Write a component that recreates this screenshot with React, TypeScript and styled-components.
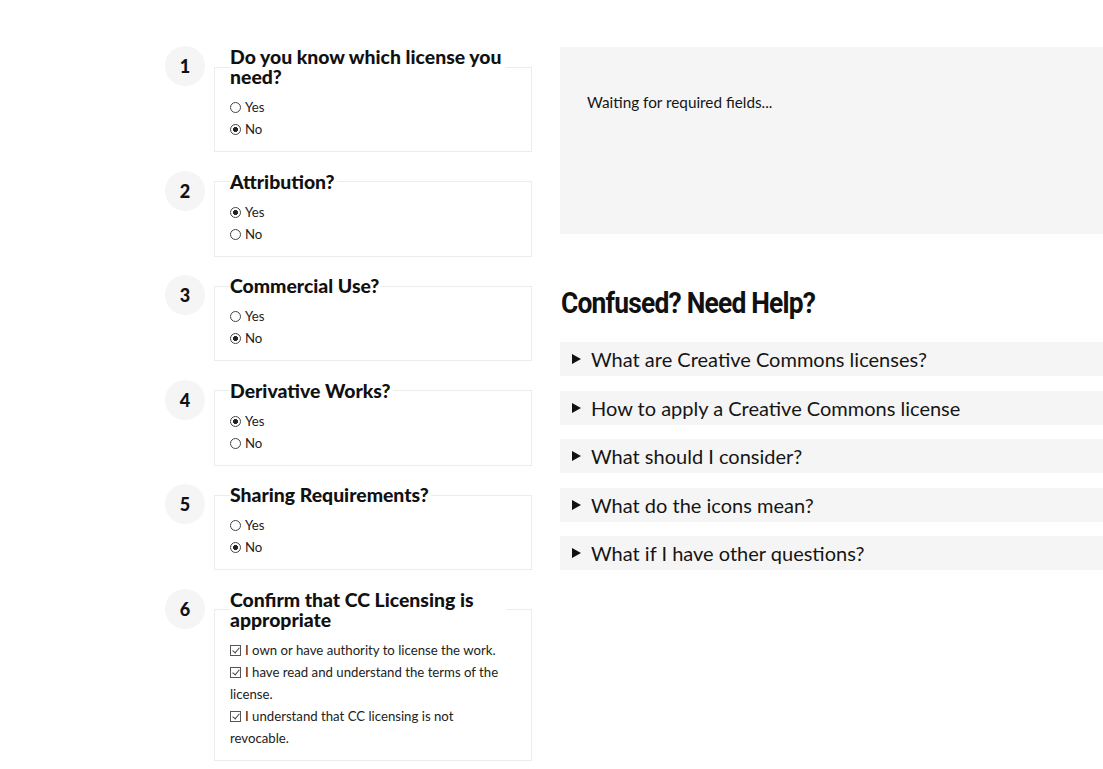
import React, { FunctionComponent } from 'react';
import styled, { createGlobalStyle } from 'styled-components';

const GlobalStyle = createGlobalStyle`
  body {
    margin: 0;
    background: #ffffff;
    color: #151515;
    font-family: 'Source Sans Pro', Lato, 'Noto Sans', sans-serif;
  }
`;

const Page = styled.div`
  display: grid;
  grid-template-columns: 367px 1fr;
  column-gap: 28px;
  padding: 47px 0 0 165px;
  align-items: start;
`;

const Steps = styled.div`
  display: flex;
  flex-direction: column;
  gap: 19.5px;
`;

const Step = styled.div`
  display: flex;
  align-items: flex-start;
  gap: 9px;
`;

const StepNumber = styled.div`
  flex: none;
  width: 40px;
  height: 40px;
  margin-top: -1px;
  border-radius: 50%;
  background: #f5f5f5;
  display: flex;
  align-items: center;
  justify-content: center;
  font-family: Lato, sans-serif;
  font-weight: 900;
  font-size: 18px;
  color: #111;
`;

const Fieldset = styled.fieldset`
  flex: 1;
  margin: 0;
  min-width: 0;
  border: 1px solid #ececec;
  padding: 0 25px 11px 15px;
`;

const Legend = styled.legend`
  padding: 0 2px 0 0;
  font-family: Lato, sans-serif;
  font-weight: 900;
  font-size: 19.4px;
  line-height: 20px;
  color: #111;
  margin-bottom: 9px;
`;

const Option = styled.label`
  display: block;
  font-family: Lato, sans-serif;
  font-size: 13.2px;
  line-height: 22px;
  color: #222;
`;

const Radio = styled.input.attrs({ type: 'radio' })`
  appearance: none;
  width: 11px;
  height: 11px;
  margin: 0 4px 0 0;
  border: 1px solid #444;
  border-radius: 50%;
  vertical-align: -1px;
  background: #fff;
  &:checked {
    background: radial-gradient(circle, #222 0 2.2px, #fff 2.8px);
  }
`;

const Check = styled.input.attrs({ type: 'checkbox' })`
  appearance: none;
  position: relative;
  width: 11px;
  height: 11px;
  margin: 0 4px 0 0;
  border: 1px solid #555;
  vertical-align: -1px;
  background: #fff;
  &:checked::after {
    content: '';
    position: absolute;
    left: 2.5px;
    top: 0px;
    width: 3px;
    height: 6px;
    border: solid #444;
    border-width: 0 1.2px 1.2px 0;
    transform: rotate(40deg);
  }
`;

const Side = styled.div`
  display: flex;
  flex-direction: column;
`;

const Result = styled.div`
  background: #f5f5f5;
  height: 187px;
  padding: 46px 27px 0;
  box-sizing: border-box;
  font-family: Lato, sans-serif;
  font-size: 15.3px;
  color: #151515;
`;

const HelpTitle = styled.h2`
  margin: 53px 0 23px 1px;
  font-family: Roboto, sans-serif;
  font-weight: 700;
  font-size: 30px;
  line-height: 32px;
  letter-spacing: -0.9px;
  color: #111;
  transform: scaleX(0.88);
  transform-origin: left center;
  white-space: nowrap;
`;

const Faq = styled.div`
  display: flex;
  flex-direction: column;
  gap: 14.5px;
`;

const FaqItem = styled.details`
  background: #f5f5f5;
`;

const FaqSummary = styled.summary`
  list-style: none;
  display: flex;
  align-items: center;
  gap: 10px;
  height: 34px;
  padding-left: 12px;
  font-family: Lato, sans-serif;
  font-size: 20px;
  color: #151515;
  cursor: pointer;
  &::-webkit-details-marker {
    display: none;
  }
  &::before {
    content: '';
    width: 0;
    height: 0;
    border-style: solid;
    border-width: 5px 0 5px 9px;
    border-color: transparent transparent transparent #111;
  }
`;

const steps = [
  { title: 'Do you know which license you need?', checked: 'No' },
  { title: 'Attribution?', checked: 'Yes' },
  { title: 'Commercial Use?', checked: 'No' },
  { title: 'Derivative Works?', checked: 'Yes' },
  { title: 'Sharing Requirements?', checked: 'No' },
];

const confirmations = [
  'I own or have authority to license the work.',
  'I have read and understand the terms of the license.',
  'I understand that CC licensing is not revocable.',
];

const questions = [
  'What are Creative Commons licenses?',
  'How to apply a Creative Commons license',
  'What should I consider?',
  'What do the icons mean?',
  'What if I have other questions?',
];

const App: FunctionComponent = () => {
  return (
    <>
      <GlobalStyle />
      <Page>
        <Steps>
          {steps.map((step, i) => (
            <Step key={step.title}>
              <StepNumber>{i + 1}</StepNumber>
              <Fieldset>
                <Legend>{step.title}</Legend>
                {['Yes', 'No'].map((opt) => (
                  <Option key={opt}>
                    <Radio name={`step-${i}`} defaultChecked={opt === step.checked} />
                    {opt}
                  </Option>
                ))}
              </Fieldset>
            </Step>
          ))}
          <Step>
            <StepNumber>6</StepNumber>
            <Fieldset>
              <Legend>Confirm that CC Licensing is appropriate</Legend>
              {confirmations.map((text) => (
                <Option key={text}>
                  <Check defaultChecked />
                  {text}
                </Option>
              ))}
            </Fieldset>
          </Step>
        </Steps>
        <Side>
          <Result>Waiting for required fields...</Result>
          <HelpTitle>Confused? Need Help?</HelpTitle>
          <Faq>
            {questions.map((q) => (
              <FaqItem key={q}>
                <FaqSummary>{q}</FaqSummary>
              </FaqItem>
            ))}
          </Faq>
        </Side>
      </Page>
    </>
  );
};

export default App;
